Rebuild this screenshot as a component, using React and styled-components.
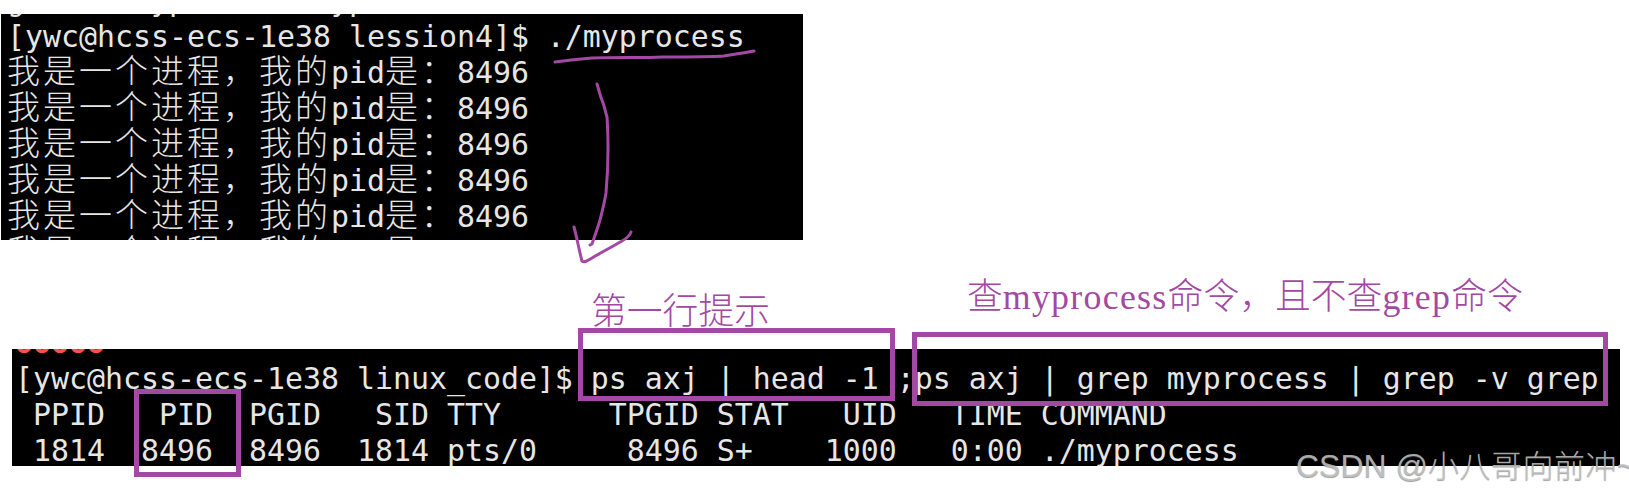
import React from "react";
import styled, { createGlobalStyle } from "styled-components";

const Global = createGlobalStyle`
  html, body { margin: 0; padding: 0; background: #fff; }
`;

const PEN = "#A349A4";

const Page = styled.div`
  position: relative;
  width: 1629px;
  height: 492px;
  overflow: hidden;
  background: #fff;
  display: flex;
  flex-direction: column;
  padding-top: 14px;
  box-sizing: border-box;
`;

const Terminal = styled.div`
  background: #000;
  color: #e6e6e6;
  font-family: "DejaVu Sans Mono", monospace;
  font-size: 29.9px;
  line-height: 36px;
  overflow: hidden;
  box-sizing: border-box;
  flex: none;
  margin-left: ${(p) => p.$left}px;
  width: ${(p) => p.$width}px;
  height: ${(p) => p.$height}px;
  padding-left: ${(p) => p.$pad}px;
`;

const ScrollBack = styled.div`
  margin-top: ${(p) => p.$offset}px;
`;

const Row = styled.div`
  height: 36px;
  white-space: pre;
`;

const Cjk = styled.span`
  font-family: "Noto Sans CJK SC", sans-serif;
  font-weight: 300;
  font-size: 33px;
  letter-spacing: 3px;
  line-height: 0;
`;

const RedMark = styled.span`
  color: #ff5050;
  font-weight: bold;
`;

const LabelRow = styled.div`
  flex: none;
  height: 109px;
  display: flex;
  align-items: flex-start;
`;

const Label = styled.div`
  color: ${PEN};
  font-family: "Noto Sans CJK SC", serif;
  font-weight: 300;
  font-size: 35.8px;
  line-height: 40px;
  white-space: pre;
  margin-left: ${(p) => p.$left}px;
  margin-top: ${(p) => p.$top}px;
`;

const Latin = styled.span`
  font-family: "Liberation Serif", serif;
  letter-spacing: 1.3px;
`;

const Highlight = styled.div`
  position: absolute;
  box-sizing: border-box;
  border: 5px solid ${PEN};
  left: ${(p) => p.$x}px;
  top: ${(p) => p.$y}px;
  width: ${(p) => p.$w}px;
  height: ${(p) => p.$h}px;
`;

const Ink = styled.svg`
  position: absolute;
  left: 0;
  top: 0;
`;

const Watermark = styled.div`
  position: absolute;
  left: 1296px;
  top: 444px;
  font-family: "Liberation Sans", "Noto Sans CJK SC", sans-serif;
  font-size: 32px;
  line-height: 40px;
  white-space: pre;
  color: rgba(195, 195, 195, 0.85);
  text-shadow: 0 1px 1px rgba(90, 90, 90, 0.6);
`;

const WatermarkCjk = styled.span`
  font-family: "Noto Sans CJK SC", sans-serif;
  font-weight: 300;
  font-size: 31px;
  letter-spacing: 0.5px;
`;

const ProcessLine = () => (
  <Row>
    <Cjk>我是一个进程，我的</Cjk>pid<Cjk>是：</Cjk>8496
  </Row>
);

export default function App() {
  return (
    <>
      <Global />
      <Page>
        <Terminal $left={1} $width={802} $height={226} $pad={6}>
          <ScrollBack $offset={-31}>
            <Row>gcc -o myprocess myprocess.c</Row>
            <Row>[ywc@hcss-ecs-1e38 lession4]$ ./myprocess</Row>
            <ProcessLine />
            <ProcessLine />
            <ProcessLine />
            <ProcessLine />
            <ProcessLine />
            <ProcessLine />
          </ScrollBack>
        </Terminal>

        <LabelRow>
          <Label $left={591} $top={48}>第一行提示</Label>
          <Label $left={197} $top={33}>
            查<Latin>myprocess</Latin>命令，且不查<Latin>grep</Latin>命令
          </Label>
        </LabelRow>

        <Terminal $left={12} $width={1608} $height={117} $pad={3}>
          <ScrollBack $offset={-24}>
            <Row><RedMark>ooooo</RedMark></Row>
            <Row>[ywc@hcss-ecs-1e38 linux_code]$ ps axj | head -1 ;ps axj | grep myprocess | grep -v grep</Row>
            <Row> PPID   PID  PGID   SID TTY      TPGID STAT   UID   TIME COMMAND</Row>
            <Row> 1814  8496  8496  1814 pts/0     8496 S+    1000   0:00 ./myprocess</Row>
          </ScrollBack>
        </Terminal>

        <Highlight $x={578} $y={328} $w={317} $h={73} />
        <Highlight $x={912} $y={332} $w={696} $h={74} />
        <Highlight $x={134} $y={389} $w={107} $h={88} />

        <Ink width="1629" height="492" fill="none" stroke={PEN} strokeLinecap="round" strokeLinejoin="round">
          <path strokeWidth="3" d="M555 62 C570 60 580 59 592 58 C620 57 640 58 663 57 C690 57 710 57 724 56 C735 54 745 53 754 51" />
          <path strokeWidth="3" d="M597 84 C599 90 600 96 602 100 C605 108 606 114 607 117 C608 130 608 140 608 150 C608 170 607 182 606 193 C604 205 602 212 600 220 C597 230 594 238 592 244 L590 245" />
          <path strokeWidth="3" d="M574 227 C577 238 579 250 582 261 C584 263 587 261 592 258 C600 253 612 247 622 241 C627 238 630 236 631 232" />
        </Ink>

        <Watermark>CSDN @<WatermarkCjk>小八哥向前冲</WatermarkCjk>~</Watermark>
      </Page>
    </>
  );
}
